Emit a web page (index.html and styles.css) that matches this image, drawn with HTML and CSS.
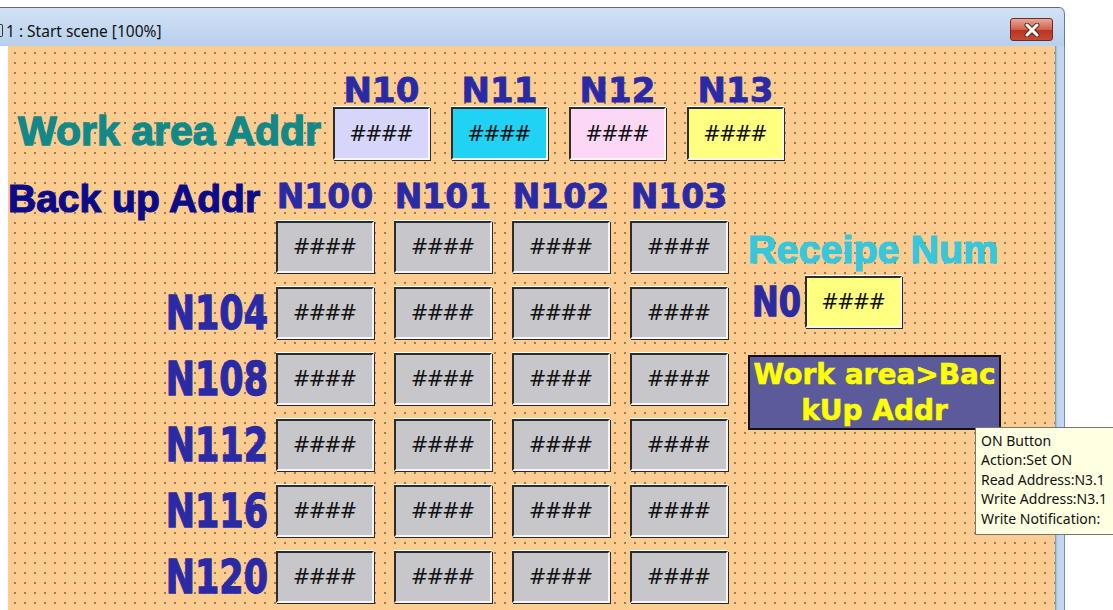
FILE: index.html
```html
<!DOCTYPE html>
<html lang="en">
<head>
  <meta charset="UTF-8">
  <title>1 : Start scene [100%]</title>
  <link rel="stylesheet" href="styles.css">
</head>
<body>
  <div class="window">
    <div class="titlebar">
      <span class="title"><span class="icon-edge"></span>1 : Start scene [100%]</span>
      <span class="close">
        <svg width="20" height="14" viewBox="0 0 20 14">
          <path d="M5 2 L15 12 M15 2 L5 12" stroke="#5a2a22" stroke-width="5" stroke-linecap="round"/>
          <path d="M5 2 L15 12 M15 2 L5 12" stroke="#fff" stroke-width="3" stroke-linecap="round"/>
        </svg>
      </span>
    </div>
    <div class="body">
      <div class="scene">

        <div class="work-row">
          <div class="work-label">Work area Addr</div>
          <div class="slot"><div class="addr">N10</div><div class="box lav">####</div></div>
          <div class="slot"><div class="addr">N11</div><div class="box cyan">####</div></div>
          <div class="slot"><div class="addr">N12</div><div class="box pink">####</div></div>
          <div class="slot"><div class="addr">N13</div><div class="box yellow">####</div></div>
        </div>

        <div class="backup">
          <div class="table">
            <div class="backup-label">Back up Addr</div>
            <div class="addr">N100</div>
            <div class="addr">N101</div>
            <div class="addr">N102</div>
            <div class="addr">N103</div>

            <div class="row-label"></div>
            <div class="box">####</div><div class="box">####</div><div class="box">####</div><div class="box">####</div>

            <div class="row-label"><span>N104</span></div>
            <div class="box">####</div><div class="box">####</div><div class="box">####</div><div class="box">####</div>

            <div class="row-label"><span>N108</span></div>
            <div class="box">####</div><div class="box">####</div><div class="box">####</div><div class="box">####</div>

            <div class="row-label"><span>N112</span></div>
            <div class="box">####</div><div class="box">####</div><div class="box">####</div><div class="box">####</div>

            <div class="row-label"><span>N116</span></div>
            <div class="box">####</div><div class="box">####</div><div class="box">####</div><div class="box">####</div>

            <div class="row-label"><span>N120</span></div>
            <div class="box">####</div><div class="box">####</div><div class="box">####</div><div class="box">####</div>
          </div>

          <div class="panel">
            <div class="recipe">Receipe Num</div>
            <div class="n0-row">
              <span class="n0">N0</span>
              <div class="box yellow">####</div>
            </div>
            <div class="action">Work area&gt;Bac<br>kUp Addr</div>
          </div>
        </div>

      </div>
      <div class="edge"></div>
    </div>
  </div>

  <div class="tooltip">
    ON Button<br>
    Action:Set ON<br>
    Read Address:N3.1<br>
    Write Address:N3.1<br>
    Write Notification:
  </div>
</body>
</html>
```

FILE: styles.css
```css
body {
  margin: 0;
  padding: 0;
  width: 1113px;
  height: 610px;
  overflow: hidden;
  background: #fff;
  font-family: 'DejaVu Sans', sans-serif;
}

.window {
  width: 1065px;
  margin-top: 7px;
  border-top: 1px solid #5d6a7a;
  border-top-right-radius: 6px;
}

.titlebar {
  height: 38px;
  display: flex;
  align-items: center;
  justify-content: space-between;
  background-image: linear-gradient(#d2e2f5, #b7d0ec);
  border-top-right-radius: 6px;
  border-right: 1px solid #6a7c92;
}

.title {
  display: flex;
  align-items: center;
  font-family: 'Noto Sans', sans-serif;
  font-size: 15.5px;
  color: #111;
  padding-top: 7px;
}

/* sliver of the scene icon, cut by the screen edge */
.icon-edge {
  width: 2px;
  height: 11px;
  margin-right: 3px;
  border: 1px solid #333;
  border-left: none;
  border-radius: 0 2px 2px 0;
}

.close {
  width: 41px;
  height: 21px;
  margin-right: 11px;
  margin-top: 5px;
  display: flex;
  align-items: center;
  justify-content: center;
  border: 1px solid #6b2c24;
  border-radius: 3px;
  background-image: linear-gradient(#e8a898, #d2604c 50%, #b83220 51%, #c84a34);
}

.body {
  display: flex;
  height: 564px;
  padding-left: 8px;
}

.scene {
  width: 1047px;
  height: 100%;
  box-sizing: border-box;
  padding-top: 28px;
  background-color: #fccc90;
  background-image: radial-gradient(circle, #a27a52 0.7px, transparent 1.1px);
  background-size: 10px 10px;
  background-position: 2px 2px;
}

.edge {
  width: 9px;
  height: 100%;
  background-image: linear-gradient(90deg, #6f8fb4, #b9d3f0 2px, #c4daf2);
  border-right: 1px solid #7a90aa;
}

/* value boxes */
.box {
  box-sizing: border-box;
  width: 98px;
  height: 52px;
  display: flex;
  align-items: center;
  justify-content: center;
  background: #c7c7cb;
  border: 2px solid;
  border-color: #2c2c2c #f6f6f6 #f6f6f6 #2c2c2c;
  box-shadow: 1px 1px 0 #2a2a2a, 0 -1px 0 #fff;
  font-family: 'DejaVu Sans', sans-serif;
  font-style: italic;
  font-size: 21px;
  letter-spacing: -2px;
  padding-right: 2px;
  color: #111;
}

.box.lav { background: #d6d6fb; }
.box.cyan { background: #20d2f4; }
.box.pink { background: #fcd8f6; }
.box.yellow { background: #ffff80; }

.addr {
  font-family: 'DejaVu Sans', sans-serif;
  font-weight: bold;
  font-size: 33px;
  line-height: 33px;
  color: #2a2aa6;
  text-align: center;
  white-space: nowrap;
  -webkit-text-stroke: 0.8px #2a2aa6;
}

/* work area */
.work-row {
  display: flex;
  align-items: flex-end;
  gap: 21px;
}

.work-label {
  width: 315px;
  margin-left: 10px;
  margin-right: -21px;
  margin-bottom: 8px;
  font-family: 'Liberation Sans', sans-serif;
  font-weight: bold;
  font-size: 41px;
  line-height: 41px;
  color: #128888;
  white-space: nowrap;
  -webkit-text-stroke: 1.4px #128888;
}

.slot {
  width: 97px;
  display: flex;
  flex-direction: column;
  align-items: center;
}

.slot .addr {
  font-size: 34px;
}

.slot .box {
  width: 97px;
  height: 53px;
}

/* back up grid */
.backup {
  display: flex;
  margin-top: 20px;
}

.table {
  display: grid;
  grid-template-columns: 248px repeat(4, 98px);
  grid-template-rows: 27px repeat(6, 52px);
  column-gap: 20px;
  row-gap: 14px;
}

.backup-label {
  font-family: 'Liberation Sans', sans-serif;
  font-weight: bold;
  font-size: 39px;
  line-height: 33px;
  padding-top: 2px;
  color: #0c0c88;
  white-space: nowrap;
  -webkit-text-stroke: 1.2px #0c0c88;
}

.row-label {
  display: flex;
  justify-content: flex-end;
  align-items: center;
  margin-right: -12px;
}

.row-label span {
  display: inline-block;
  font-family: 'DejaVu Sans', sans-serif;
  font-weight: bold;
  font-size: 35px;
  line-height: 52px;
  color: #2a2aa6;
  transform: scaleY(1.3);
  -webkit-text-stroke: 1px #2a2aa6;
}

/* right side */
.panel {
  display: flex;
  flex-direction: column;
  align-items: flex-start;
  margin-left: 20px;
  padding-top: 50px;
}

.recipe {
  font-family: 'Liberation Sans', sans-serif;
  font-weight: bold;
  font-size: 39.5px;
  line-height: 39px;
  color: #37c6da;
  white-space: nowrap;
  -webkit-text-stroke: 1.2px #37c6da;
}

.n0-row {
  display: flex;
  align-items: center;
  gap: 4px;
  margin-top: 7px;
}

.n0 {
  display: inline-block;
  margin-left: 4px;
  font-family: 'DejaVu Sans', sans-serif;
  font-weight: bold;
  font-size: 32px;
  line-height: 52px;
  color: #2a2aa2;
  transform: scaleY(1.3);
  -webkit-text-stroke: 1px #2a2aa2;
}

.n0-row .box {
  width: 97px;
}

.action {
  box-sizing: border-box;
  width: 253px;
  height: 75px;
  margin-top: 27px;
  background: #5b5b9b;
  border: 2px solid #111;
  font-family: 'DejaVu Sans', sans-serif;
  font-weight: bold;
  font-size: 28px;
  line-height: 36px;
  color: #ffff00;
  text-align: center;
  white-space: nowrap;
  -webkit-text-stroke: 0.6px #ffff00;
}

/* hover tip over the button */
.tooltip {
  position: absolute;
  left: 975px;
  top: 427px;
  width: 160px;
  height: 108px;
  box-sizing: border-box;
  padding: 3px 0 0 5px;
  background: #ffffe1;
  border: 1px solid #777;
  font-family: 'Noto Sans', sans-serif;
  font-size: 14px;
  line-height: 19.4px;
  color: #111;
  white-space: nowrap;
}
```
